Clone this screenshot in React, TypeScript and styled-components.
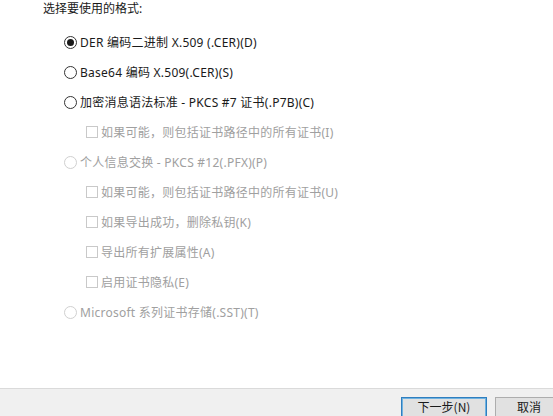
import React from "react";
import styled, { createGlobalStyle } from "styled-components";

const Global = createGlobalStyle`
  html, body { margin: 0; padding: 0; background: #ffffff; }
  body { font-family: "Noto Sans", "Noto Sans CJK SC", sans-serif; }
  * { box-sizing: border-box; }
`;

const Page = styled.div`
  width: 553px;
  height: 416px;
  display: flex;
  flex-direction: column;
  overflow: hidden;
  background: #fff;
  font-family: "Noto Sans", "Noto Sans CJK SC", sans-serif;
  font-size: 12px;
  letter-spacing: 0.25px;
  color: #1a1a1a;
`;

const Body = styled.div`
  flex: 1;
  padding: 0 0 0 43px;
`;

const Title = styled.div`
  height: 18px;
  line-height: 18px;
  color: #1a1a1a;
  letter-spacing: 0;
`;

const List = styled.div`
  margin-top: 9px;
  display: flex;
  flex-direction: column;
`;

const Row = styled.div<{ $indent: number; $disabled?: boolean }>`
  height: 30px;
  display: flex;
  align-items: center;
  padding-left: ${(p) => p.$indent}px;
  color: ${(p) => (p.$disabled ? "#a0a0a0" : "#1a1a1a")};
  white-space: nowrap;
`;

const Radio = styled.span<{ $checked?: boolean; $disabled?: boolean }>`
  width: 13px;
  height: 13px;
  border-radius: 50%;
  border: 1px solid ${(p) => (p.$disabled ? "#d0d0d0" : "#333333")};
  background: #fff;
  margin-right: 3px;
  display: inline-flex;
  align-items: center;
  justify-content: center;
  flex: none;
  &::after {
    content: "";
    width: 7px;
    height: 7px;
    border-radius: 50%;
    background: ${(p) => (p.$checked ? "#1a1a1a" : "transparent")};
  }
`;

const Check = styled.span`
  width: 12px;
  height: 12px;
  border: 1px solid #c9c9c9;
  background: #fff;
  margin-right: 3px;
  flex: none;
`;

const Footer = styled.div`
  height: 28px;
  border-top: 1px solid #dadada;
  background: #f0f0f0;
  display: flex;
  gap: 8px;
  padding: 8px 0 0 401px;
  overflow: hidden;
`;

const Button = styled.button<{ $primary?: boolean; $w: number }>`
  flex: none;
  width: ${(p) => p.$w}px;
  height: 23px;
  border: 1px solid ${(p) => (p.$primary ? "#2f7ebf" : "#adadad")};
  box-shadow: ${(p) => (p.$primary ? "inset 0 0 0 1px #6fb2e0" : "none")};
  background: #e1e1e1;
  font-family: "Noto Sans CJK SC", sans-serif;
  font-size: 12px;
  color: #1a1a1a;
  padding: 0 0 3px;
  line-height: 16px;
`;

type Item =
  | { kind: "radio"; text: string; checked?: boolean; disabled?: boolean }
  | { kind: "check"; text: string };

const items: Item[] = [
  { kind: "radio", text: "DER 编码二进制 X.509 (.CER)(D)", checked: true },
  { kind: "radio", text: "Base64 编码 X.509(.CER)(S)" },
  { kind: "radio", text: "加密消息语法标准 - PKCS #7 证书(.P7B)(C)" },
  { kind: "check", text: "如果可能，则包括证书路径中的所有证书(I)" },
  { kind: "radio", text: "个人信息交换 - PKCS #12(.PFX)(P)", disabled: true },
  { kind: "check", text: "如果可能，则包括证书路径中的所有证书(U)" },
  { kind: "check", text: "如果导出成功，删除私钥(K)" },
  { kind: "check", text: "导出所有扩展属性(A)" },
  { kind: "check", text: "启用证书隐私(E)" },
  { kind: "radio", text: "Microsoft 系列证书存储(.SST)(T)", disabled: true },
];

export default function App() {
  return (
    <Page>
      <Global />
      <Body>
        <Title>选择要使用的格式:</Title>
        <List>
          {items.map((it, i) =>
            it.kind === "radio" ? (
              <Row key={i} $indent={21} $disabled={it.disabled}>
                <Radio $checked={it.checked} $disabled={it.disabled} />
                {it.text}
              </Row>
            ) : (
              <Row key={i} $indent={43} $disabled>
                <Check />
                {it.text}
              </Row>
            )
          )}
        </List>
      </Body>
      <Footer>
        <Button $primary $w={86}>下一步(N)</Button>
        <Button $w={68}>取消</Button>
      </Footer>
    </Page>
  );
}
